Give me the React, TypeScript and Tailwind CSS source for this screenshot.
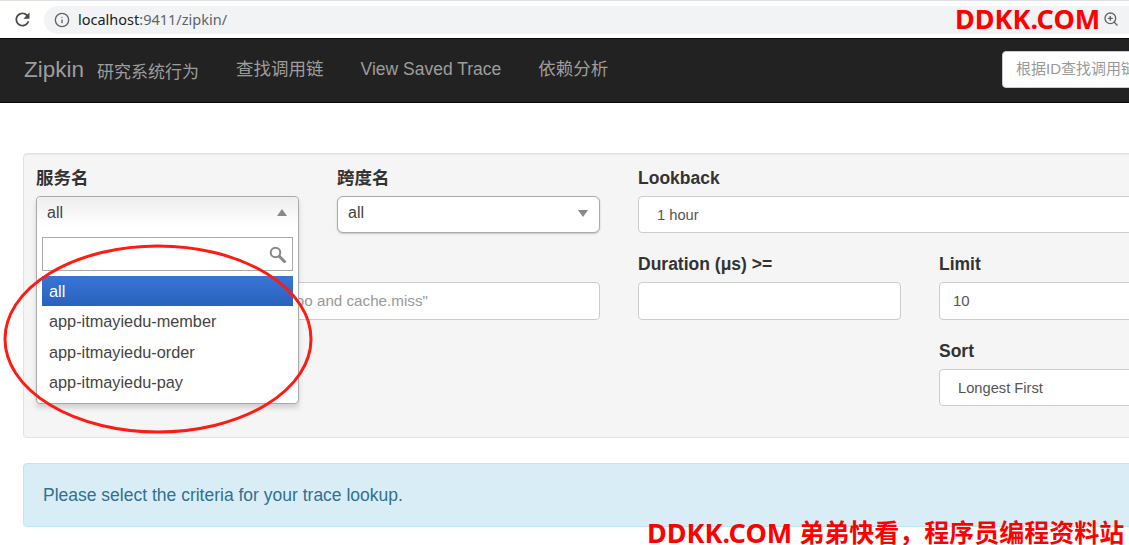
import { Info, ZoomIn } from "lucide-react";

const sans = "font-['Liberation_Sans','Noto_Sans_CJK_SC',sans-serif]";
const mark = "font-['Noto_Sans','Noto_Sans_CJK_SC',sans-serif] font-bold text-[#ff0000]";

const Label = ({ text, gap = "mb-[5px]" }: { text?: string; gap?: string }) => (
  <div className={`h-[25px] text-[17.5px] leading-[25px] font-bold text-[#333] ${gap}`}>
    {text}
  </div>
);

const Box = ({
  children,
  className = "",
}: {
  children?: React.ReactNode;
  className?: string;
}) => (
  <div
    className={`flex items-center rounded-[4px] border border-[#ccc] bg-white pt-[1px] text-[15px] text-[#555] ${className}`}
  >
    {children}
  </div>
);

const Arrow = ({ up = false }: { up?: boolean }) => (
  <svg width="10" height="7" viewBox="0 0 10 7" className="mr-[11px]">
    <polygon points={up ? "5,0 10,7 0,7" : "0,0 10,0 5,7"} fill="#888" />
  </svg>
);

const ServiceDropdown = () => (
  <div className="relative h-[37px]">
    <div className="absolute inset-x-0 top-0 z-10 h-[208px] rounded-[4px] border border-[#aaa] bg-white shadow-[0_4px_5px_rgba(0,0,0,0.15)]">
      <div className="flex h-[30px] items-center justify-between rounded-t-[4px] bg-gradient-to-b from-[#eee] to-white pl-[10px] pt-[1px] text-[16px] text-[#444]">
        <span>all</span>
        <Arrow up />
      </div>
      <div className="mx-[5px] mt-[10px] flex h-[34px] items-center justify-end border border-[#aaa] pr-[6px]">
        <svg width="17" height="17" viewBox="0 0 17 17" fill="none" stroke="#888">
          <circle cx="6.5" cy="6.5" r="4.8" strokeWidth="2" />
          <line x1="10.5" y1="10.5" x2="15.5" y2="15.5" strokeWidth="3" strokeLinecap="round" />
        </svg>
      </div>
      <ul className="mx-[5px] mt-[5px] text-[16.3px] text-[#444]">
        <li className="flex h-[30px] items-center bg-gradient-to-b from-[#3875d7] to-[#2a62bc] pl-[7px] text-white">
          all
        </li>
        <li className="flex h-[31px] items-center pl-[7px]">app-itmayiedu-member</li>
        <li className="flex h-[30px] items-center pl-[7px]">app-itmayiedu-order</li>
        <li className="flex h-[30px] items-center pl-[7px]">app-itmayiedu-pay</li>
      </ul>
    </div>
  </div>
);

export default function App() {
  return (
    <div className={`relative h-[545px] w-[1129px] overflow-hidden bg-white ${sans}`}>
      {/* browser chrome */}
      <div className="h-[38px] border-t border-[#dee1e6] bg-white">
        <div className="flex h-[37px] items-center">
          <svg width="21" height="21" viewBox="0 0 24 24" fill="#4a4a4a" className="ml-[12px] shrink-0">
            <path d="M17.65 6.35C16.2 4.9 14.21 4 12 4c-4.42 0-7.99 3.58-7.99 8s3.57 8 7.99 8c3.73 0 6.84-2.55 7.73-6h-2.08c-.82 2.33-3.04 4-5.65 4-3.31 0-6-2.69-6-6s2.69-6 6-6c1.66 0 3.14.69 4.22 1.78L13 11h7V4l-2.35 2.35z" />
          </svg>
          <div className="ml-[11px] flex h-[28px] w-[1100px] shrink-0 items-center rounded-full bg-[#f1f3f4] pl-[10px]">
            <Info size={16} strokeWidth={2} className="text-[#5f6368]" />
            <span className="ml-[8px] font-['Noto_Sans',sans-serif] text-[14.5px] text-[#5f6368]">
              <span className="text-[#202124]">localhost</span>:9411/zipkin/
            </span>
          </div>
        </div>
      </div>

      {/* navbar */}
      <nav className="flex h-[65px] items-center border-y border-[#080808] bg-[#222] pb-[2px] pl-[24px] text-[#9d9d9d]">
        <span className="text-[22.5px]">Zipkin</span>
        <span className="ml-[13px] mt-[6px] text-[17px]">研究系统行为</span>
        <span className="ml-[37px] text-[17.5px]">查找调用链</span>
        <span className="ml-[37px] text-[17.5px]">View Saved Trace</span>
        <span className="ml-[37px] text-[17.5px]">依赖分析</span>
        <div className="absolute left-[1002px] top-[51px] flex h-[37px] w-[200px] items-center rounded-[4px] border border-[#ccc] bg-white pl-[13px] text-[15px] text-[#999]">
          根据ID查找调用链
        </div>
      </nav>

      {/* search form */}
      <div className="ml-[23px] mt-[50px] w-[1200px] rounded-[4px] border border-[#e3e3e3] bg-[#f5f5f5] pb-[31px] pl-[12px] pt-[12px] shadow-[inset_0_1px_1px_rgba(0,0,0,0.05)]">
        <div className="grid grid-cols-[263px_263px_263px_263px] gap-x-[38px] gap-y-[19px]">
          <div>
            <Label text="服务名" />
            <ServiceDropdown />
          </div>
          <div>
            <Label text="跨度名" />
            <div className="flex h-[37px] items-center justify-between rounded-[6px] border border-[#aaa] bg-white pb-[3px] pl-[10px] text-[16px] text-[#444] shadow-[0_1px_2px_rgba(0,0,0,0.2)]">
              <span>all</span>
              <Arrow />
            </div>
          </div>
          <div className="col-span-2">
            <Label text="Lookback" />
            <Box className="h-[37px] pl-[18px] !text-[14.7px]">1 hour</Box>
          </div>

          <div className="col-span-2">
            <Label />
            <Box className="h-[38px] pl-[12px] !text-[15.2px] !text-[#999]">
              Ex. "http.path=/foo/bar/ and cluster=foo and cache.miss"
            </Box>
          </div>
          <div>
            <Label text="Duration (μs) >=" />
            <Box className="h-[38px]" />
          </div>
          <div>
            <Label text="Limit" />
            <Box className="h-[38px] pl-[13px]">10</Box>
          </div>

          <div className="col-start-4">
            <Label text="Sort" />
            <Box className="h-[37px] pl-[18px] !text-[14.7px]">Longest First</Box>
          </div>
        </div>
      </div>

      {/* hint */}
      <div className="ml-[23px] mt-[25px] flex h-[64px] w-[1200px] items-center rounded-[4px] border border-[#bce8f1] bg-[#d9edf7] pl-[19px] text-[17.5px] text-[#31708f]">
        Please select the criteria for your trace lookup.
      </div>

      {/* annotations over the screenshot */}
      <svg className="absolute left-0 top-[240px] z-20" width="320" height="200" fill="none">
        <ellipse cx="158" cy="99" rx="153" ry="93" stroke="#ff1a12" strokeWidth="3" />
      </svg>
      <span className={`absolute left-[955px] top-0 z-20 text-[27px] leading-[38px] ${mark}`}>
        DDKK.COM
      </span>
      <ZoomIn size={16} className="absolute left-[1103px] top-[11px] z-20 text-[#5f6368]" />
      <span className={`absolute left-[647px] top-[517px] z-20 flex h-[28px] items-center gap-[7px] pt-[3px] ${mark}`}>
        <span className="text-[27px] leading-[25px]">DDKK.COM</span>
        <span className="text-[25px] leading-[25px]">弟弟快看，程序员编程资料站</span>
      </span>
    </div>
  );
}
